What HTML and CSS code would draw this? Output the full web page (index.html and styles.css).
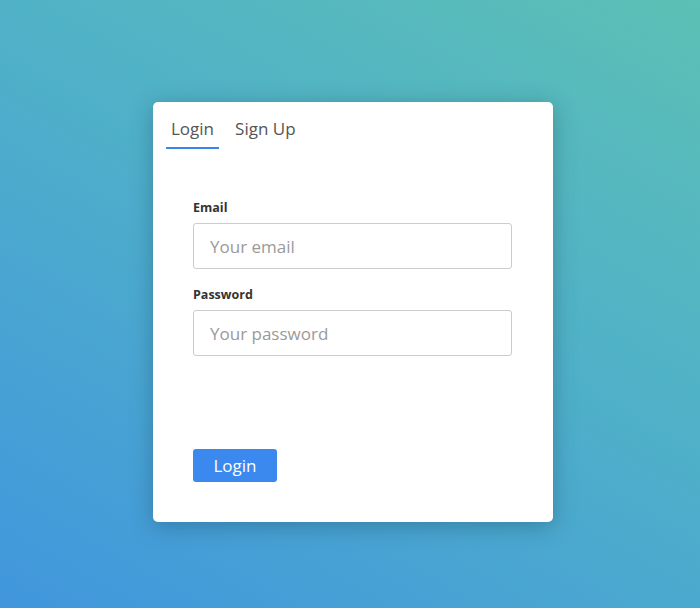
FILE: index.html
```html
<!DOCTYPE html>
<html>
<head>
<meta charset="utf-8">
<link rel="stylesheet" href="styles.css">
</head>
<body>
<div class="page">
  <div class="card">
    <div class="tabs">
      <div class="tab active">Login</div>
      <div class="tab">Sign Up</div>
    </div>
    <form class="form">
      <label class="label">Email</label>
      <input class="input" type="text" placeholder="Your email">
      <label class="label">Password</label>
      <input class="input" type="password" placeholder="Your password">
      <div class="actions">
        <button class="btn" type="button">Login</button>
      </div>
    </form>
  </div>
</div>
</body>
</html>
```
FILE: styles.css
```css
* { box-sizing: border-box; }
html, body { margin: 0; padding: 0; height: 100%; }
body {
  font-family: "Open Sans", "Noto Sans", sans-serif;
  background: linear-gradient(30deg, #4196dd 0%, #4fb0c9 55%, #5cc0b5 100%);
}
.page {
  height: 608px;
  display: flex;
  justify-content: center;
  padding-top: 102px;
  padding-left: 6px;
}
.card {
  width: 400px;
  height: 420px;
  background: #fff;
  border-radius: 5px;
  box-shadow: 0 4px 22px rgba(20, 60, 80, 0.35);
  padding: 12px 13px 0;
}
.tabs {
  display: flex;
  gap: 11px;
}
.tab {
  font-size: 17px;
  color: #555;
  padding: 3px 5px 6px;
  border-bottom: 2px solid transparent;
  line-height: 24px;
}
.tab.active {
  border-bottom-color: #3b87e8;
}
.form {
  display: flex;
  flex-direction: column;
  padding: 50px 27px 0;
}
.label {
  font-size: 12.5px;
  font-weight: 700;
  color: #333;
  line-height: 18px;
  margin-bottom: 6px;
}
.input {
  width: 319px;
  height: 46px;
  border: 1px solid #ccc;
  border-radius: 3px;
  padding: 0 16px;
  font-family: inherit;
  font-size: 17px;
  color: #333;
  margin-bottom: 17px;
  outline: none;
}
.input::placeholder { color: #9a9a9a; }
.actions {
  padding-top: 76px;
}
.btn {
  width: 84px;
  height: 33px;
  background: #3b88ee;
  color: #fff;
  border: none;
  border-radius: 3px;
  font-family: inherit;
  font-size: 17px;
  padding: 0;
}
```
